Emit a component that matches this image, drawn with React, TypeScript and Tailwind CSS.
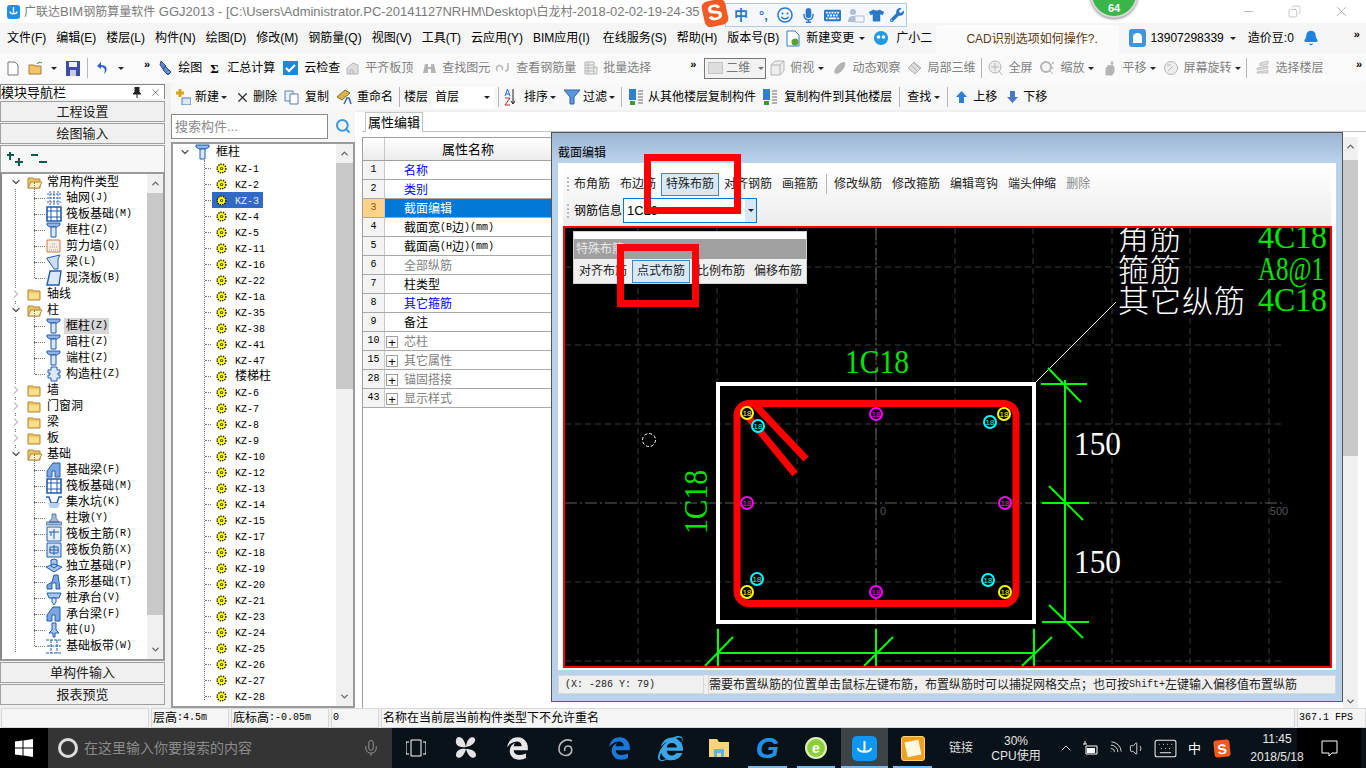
import React from "react";
import { FaEdgeLegacy, FaInternetExplorer, FaRegSmile, FaMicrophone, FaKeyboard, FaTshirt, FaWrench } from "react-icons/fa";
import {
  Bell,
  ChevronDown,
  ChevronRight,
  ChevronUp,
  Copy,
  Keyboard,
  Mic,
  Minus,
  Search,
  Volume1,
  Wifi,
  X,
} from "lucide-react";

const Dd = ({ className = "" }: { className?: string }) => (
  <span className={`inline-block w-0 h-0 border-x-[3px] border-t-[3px] border-x-transparent border-t-[#222] ${className}`} />
);

const Chevrons = ({ className = "" }: { className?: string }) => (
  <span className={`text-[11px] font-bold leading-none text-black ${className}`}>»</span>
);

const Sep = ({ className = "" }: { className?: string }) => <span className={`w-px h-[20px] bg-[#b5b5b5] ${className}`} />;

// ascii in the old bitmap song font runs 6px wide, so it gets its own span
const Sim = ({ text }: { text: string }) => (
  <>
    {text.split(/([\x00-\x7f]+)/).map((part, i) =>
      /[\x00-\x7f]/.test(part) ? (
        <span key={i} className="[font-family:'Liberation_Mono',monospace] text-[10px]">
          {part}
        </span>
      ) : (
        <span key={i}>{part}</span>
      )
    )}
  </>
);

const GrayIcon = ({ kind }: { kind: string }) => {
  const c = "#b4b4b4";
  return (
    <svg width="15" height="16" viewBox="0 0 15 16" className="shrink-0">
      {kind === "plate" && <path d="M2 14V8l6-5 5 2v9zM5 14v-4h3v4" fill="#ddd" stroke={c} />}
      {kind === "binoc" && <path d="M1 13l2-9h3v3h3V4h3l2 9H9v-4H6v4z" fill={c} />}
      {kind === "rebar" && <path d="M2 11a3 3 0 1 1 4-1M9 11a3 3 0 0 0 3-3V3" fill="none" stroke={c} strokeWidth="1.5" />}
      {kind === "batch" && <path d="M2 2h9v12H2zM2 5h9M2 8h9M2 11h9M5 2v12M11 7h3v7h-3" fill="#eee" stroke={c} />}
      {kind === "box" && <path d="M1 5l4-4h9v10l-4 4H1zM1 5h9v10M10 5l4-4" fill="#eee" stroke={c} />}
      {kind === "orbit" && <path d="M2 12C4 5 9 2 13 2c1 5-3 11-9 12z" fill={c} />}
      {kind === "local" && <path d="M1 8l6-6 7 6-6 6zM4 5l7 7M7 3l6 6" fill="#ddd" stroke={c} />}
      {kind === "full" && (
        <>
          <circle cx="7" cy="7" r="6" fill="#eee" stroke={c} />
          <path d="M7 3v8M3 7h8M11 11l3 4" stroke={c} fill="none" />
        </>
      )}
      {kind === "zoom" && (
        <>
          <circle cx="6" cy="7" r="5" fill="#f4f4f4" stroke={c} strokeWidth="2" />
          <path d="M10 11l3 3M12 3h2M13 2v2M12 8h2" stroke={c} />
        </>
      )}
      {kind === "pan" && <path d="M4 15V8l2-1V5l2 1 2-1 2 2v5l-2 3zM10 1v4M8 3h4" fill={c} stroke={c} />}
      {kind === "rotate" && (
        <>
          <circle cx="8" cy="8" r="6.5" fill="#eee" stroke={c} />
          <path d="M5 11l5-5M4 5h4" stroke={c} />
        </>
      )}
      {kind === "floors" && <path d="M5 3l8-2v3l-8 2zM2 8l11-2v2L2 10zM2 12l11-2v3H2z" fill="#ddd" stroke={c} strokeWidth=".7" />}
    </svg>
  );
};

const Tool = ({ icon, label, dd, gray, className = "" }: { icon?: React.ReactNode; label: string; dd?: boolean; gray?: boolean; className?: string }) => (
  <div className={`flex items-center shrink-0 ${gray ? "text-[#7f7f7f]" : "text-black"} ${className}`}>
    {icon}
    {icon && <span className="w-[5px]" />}
    <span>{label}</span>
    {dd && <Dd className="ml-[4px]" />}
  </div>
);

const ColIcon = () => (
  <svg width="15" height="16" viewBox="0 0 15 16" className="shrink-0">
    <path d="M1 1h13v2l-3 2H4L1 3z" fill="#8fb4ea" stroke="#1f5cb0" />
    <path d="M5 5h5v10H5z" fill="#dbe8fb" stroke="#1f5cb0" />
  </svg>
);

const Gear = () => (
  <svg width="11" height="11" viewBox="0 0 11 11" className="shrink-0">
    <circle cx="5.5" cy="5.5" r="4.4" fill="#ffff00" stroke="#111" strokeWidth="1.4" strokeDasharray="1.4 1" />
    <circle cx="5.5" cy="5.5" r="1.6" fill="#333" />
    <circle cx="5.5" cy="5.5" r=".7" fill="#ffff00" />
  </svg>
);

const Folder = ({ open }: { open?: boolean }) => (
  <svg width="16" height="13" viewBox="0 0 16 13" className="shrink-0">
    <path d="M1 2h5l1 1h6v9H1z" fill="#eec35c" stroke="#b08b3e" />
    {open ? <path d="M4 6h11l-3 6H1z" fill="#fdf0be" stroke="#b08b3e" /> : <path d="M2 5h10v6H2z" fill="#ffe089" />}
  </svg>
);

const TypeIcon = ({ kind }: { kind: string }) => {
  const b = "#1f5cb0";
  const inner = () => {
    switch (kind) {
      case "grid":
        return <path d="M1 4h14M1 8h14M1 12h14M4 1v14M8 1v14M12 1v14" stroke="#2d63b8" fill="none" strokeDasharray="2 1" />;
      case "raft":
        return (
          <>
            <path d="M1 1h14v14H1z" fill="#fff" stroke={b} strokeWidth="1.6" />
            <path d="M5 1v14M11 1v14M1 5h14M1 11h14" stroke={b} fill="none" />
          </>
        );
      case "col":
        return (
          <>
            <path d="M1 1h13v2l-3 2H4L1 3z" fill="#8fb4ea" stroke={b} />
            <path d="M5 5h5v10H5z" fill="#dbe8fb" stroke={b} />
          </>
        );
      case "wall":
        return (
          <>
            <path d="M1 2h13v12H1z" fill="#f2ede7" stroke="#d8793d" />
            <path d="M3 12h9M4 9h7M6 6h4" stroke="#9a9a9a" strokeDasharray="1 1" />
          </>
        );
      case "beam":
        return <path d="M1 4l13-3-2 4v10H8L4 9 1 5z" fill="#cfe0f6" stroke={b} />;
      case "slab":
        return <path d="M4 1h11l-2 14H1z" fill="#dbe8fb" stroke={b} strokeWidth="1.4" />;
      case "gz":
        return <path d="M5 1h6v3h3v3h-2v2h2v3h-3v3H5v-3H2V9h2V7H2V4h3z" fill="#dbe8fb" stroke={b} />;
      case "fbeam":
        return <path d="M1 15V9l6-8h7v14H9V9H6v6z" fill="#7aa7e2" stroke={b} />;
      case "pit":
        return (
          <>
            <path d="M0 3h3l2 6h6l2-6h3" stroke={b} fill="none" strokeWidth="1.4" />
            <path d="M2 9h12l-2 5H4z" fill="#b7d1f2" />
          </>
        );
      case "pier":
        return <path d="M0 15v-3h16v3zM3 12l3-4V4h4v4l3 4z" fill="#aab9cf" stroke={b} strokeWidth=".7" />;
      case "main":
        return (
          <>
            <path d="M1 1h14v14H1z" fill="#e8f1fc" stroke={b} />
            <path d="M3 6h10M8 3v10M5 6v4" stroke={b} fill="none" />
          </>
        );
      case "neg":
        return (
          <>
            <path d="M1 1h14v14H1z" fill="#cfe0f6" stroke={b} />
            <path d="M3 8h10M8 3v10M4 5h8v6H4z" stroke={b} fill="none" />
          </>
        );
      case "iso":
        return <path d="M0 9l8-3 8 3-8 5zM5 8V2l3-1 3 1v6l-3 2z" fill="#a9c6ee" stroke={b} />;
      case "strip":
        return <path d="M1 15v-4l5-3 2-7h4l2 14h-4V9H6v6z" fill="#7aa7e2" stroke={b} />;
      case "cap":
        return (
          <>
            <path d="M1 3h14l-2 5H3z" fill="#a9c6ee" stroke={b} />
            <path d="M6 8h4v4l-2 3-2-3z" fill="#dbe8fb" stroke={b} />
          </>
        );
      case "pile":
        return <path d="M6 1h4v7l3 3H9v4H7v-4H3l3-3z" fill="#a9c6ee" stroke={b} />;
      case "band":
        return <path d="M0 2h16M0 15h16M5 2v13M11 2v13M1 8h14" stroke={b} fill="none" strokeDasharray="3 1" />;
      default:
        return null;
    }
  };
  return (
    <svg width="16" height="16" viewBox="0 0 16 16" className="shrink-0">
      {inner()}
    </svg>
  );
};

type TreeRow = { label: string; icon?: string; open?: boolean; selected?: boolean };

const typeTree: TreeRow[] = [
  { label: "常用构件类型", open: true },
  { label: "轴网(J)", icon: "grid" },
  { label: "筏板基础(M)", icon: "raft" },
  { label: "框柱(Z)", icon: "col" },
  { label: "剪力墙(Q)", icon: "wall" },
  { label: "梁(L)", icon: "beam" },
  { label: "现浇板(B)", icon: "slab" },
  { label: "轴线" },
  { label: "柱", open: true },
  { label: "框柱(Z)", icon: "col", selected: true },
  { label: "暗柱(Z)", icon: "col" },
  { label: "端柱(Z)", icon: "col" },
  { label: "构造柱(Z)", icon: "gz" },
  { label: "墙" },
  { label: "门窗洞" },
  { label: "梁" },
  { label: "板" },
  { label: "基础", open: true },
  { label: "基础梁(F)", icon: "fbeam" },
  { label: "筏板基础(M)", icon: "raft" },
  { label: "集水坑(K)", icon: "pit" },
  { label: "柱墩(Y)", icon: "pier" },
  { label: "筏板主筋(R)", icon: "main" },
  { label: "筏板负筋(X)", icon: "neg" },
  { label: "独立基础(P)", icon: "iso" },
  { label: "条形基础(T)", icon: "strip" },
  { label: "桩承台(V)", icon: "cap" },
  { label: "承台梁(F)", icon: "fbeam" },
  { label: "桩(U)", icon: "pile" },
  { label: "基础板带(W)", icon: "band" },
];

const kzList = [
  "KZ-1", "KZ-2", "KZ-3", "KZ-4", "KZ-5", "KZ-11", "KZ-16", "KZ-22", "KZ-1a", "KZ-35", "KZ-38", "KZ-41", "KZ-47", "楼梯柱",
  "KZ-6", "KZ-7", "KZ-8", "KZ-9", "KZ-10", "KZ-12", "KZ-13", "KZ-14", "KZ-15", "KZ-17", "KZ-18", "KZ-19", "KZ-20", "KZ-21",
  "KZ-23", "KZ-24", "KZ-25", "KZ-26", "KZ-27", "KZ-28",
];

const props = [
  { n: "1", t: "名称", c: "text-[#0000ff]" },
  { n: "2", t: "类别", c: "text-[#0000ff]" },
  { n: "3", t: "截面编辑", c: "text-white", sel: true },
  { n: "4", t: "截面宽(B边)(mm)", c: "text-black" },
  { n: "5", t: "截面高(H边)(mm)", c: "text-black" },
  { n: "6", t: "全部纵筋", c: "text-[#808080]" },
  { n: "7", t: "柱类型", c: "text-black" },
  { n: "8", t: "其它箍筋", c: "text-[#0000ff]" },
  { n: "9", t: "备注", c: "text-black" },
  { n: "10", t: "芯柱", c: "text-[#808080]", plus: true },
  { n: "15", t: "其它属性", c: "text-[#808080]", plus: true },
  { n: "28", t: "锚固搭接", c: "text-[#808080]", plus: true },
  { n: "43", t: "显示样式", c: "text-[#808080]", plus: true },
];

const NavBtn = ({ label }: { label: string }) => (
  <div className="h-[21px] mb-px flex items-center justify-center bg-[#f0f0f0] border border-[#a0a0a0] text-[13px] text-[#222]">{label}</div>
);

const Bar = ({ x, y, color }: { x: number; y: number; color: string }) => (
  <g>
    <circle cx={x} cy={y} r="6" fill="#000" stroke={color} strokeWidth="2" />
    <text x={x} y={y + 3} textAnchor="middle" fontSize="8" fill={color} fontFamily="Liberation Sans">
      18
    </text>
  </g>
);

const Drawing = () => {
  const green = "#00e400";
  const serif = "Liberation Serif";
  const cjk = "Noto Sans CJK SC";
  return (
    <svg width="765" height="438" viewBox="565 228 765 438" className="block">
      {/* grid */}
      <g stroke="#3a3a3a" strokeDasharray="6 4" fill="none">
        {[638, 717, 797, 876, 955, 1033, 1112, 1190, 1269].map((x) => (
          <path key={x} d={`M${x} 228V664`} />
        ))}
        {[267, 345, 424, 582, 661].map((y) => (
          <path key={y} d={`M565 ${y}H1283`} />
        ))}
      </g>
      <path d="M565 503H1283" stroke="#606060" strokeDasharray="12 3 2 3" />
      <path d="M876 228V664" stroke="#606060" strokeDasharray="12 3 2 3" />
      <text x="883" y="515" fontSize="11" fill="#555" fontFamily="Liberation Sans" textAnchor="middle">0</text>
      <text x="1279" y="515" fontSize="11" fill="#555" fontFamily="Liberation Sans" textAnchor="middle">500</text>
      <circle cx="649" cy="440" r="6.5" fill="none" stroke="#fff" strokeDasharray="3 2" />

      {/* legend */}
      <g fill="#fff" fontFamily={cjk} fontSize="31" fontWeight="300">
        <text x="1118" y="249" letterSpacing="1">角筋</text>
        <text x="1118" y="281" letterSpacing="1">箍筋</text>
        <text x="1118" y="312" letterSpacing="1">其它纵筋</text>
      </g>
      <g fill={green} fontFamily={serif} fontSize="34">
        <text x="1258" y="248" textLength="69" lengthAdjust="spacingAndGlyphs">4C18</text>
        <text x="1258" y="280" textLength="66" lengthAdjust="spacingAndGlyphs">A8@1</text>
        <text x="1258" y="311" textLength="69" lengthAdjust="spacingAndGlyphs">4C18</text>
        <text x="845" y="373" textLength="64" lengthAdjust="spacingAndGlyphs">1C18</text>
        <text x="707" y="534" textLength="64" lengthAdjust="spacingAndGlyphs" transform="rotate(-90 707 534)">1C18</text>
      </g>
      <path d="M1036 382L1116 302" stroke="#fff" />

      {/* section */}
      <rect x="718" y="384" width="316" height="238" fill="none" stroke="#fff" strokeWidth="4" />
      <rect x="737" y="403.5" width="279" height="200" rx="12" fill="none" stroke="#ff0000" strokeWidth="7" />
      <path d="M740 407L795 474M755 405L806 459" stroke="#ff0000" strokeWidth="7" fill="none" />
      {[
        [876, 414, "#ff00ff"],
        [747, 503, "#ff00ff"],
        [1005, 503, "#ff00ff"],
        [876, 592, "#ff00ff"],
        [758, 426, "#00ffff"],
        [990, 422, "#00ffff"],
        [757, 579, "#00ffff"],
        [988, 580, "#00ffff"],
        [747, 413, "#ffff00"],
        [1004, 414, "#ffff00"],
        [747, 592, "#ffff00"],
        [1005, 592, "#ffff00"],
      ].map(([x, y, c]) => (
        <Bar key={`${x}-${y}`} x={x as number} y={y as number} color={c as string} />
      ))}

      {/* dimensions */}
      <g stroke="#00ff00" strokeWidth="2" fill="none">
        <path d="M1065 380V622M1041 384H1087M1042 503H1089M1042 622H1089" />
        <path d="M1048 368L1081 402M1049 486L1083 520M1049 605L1083 638" />
        <path d="M718 653H1034M718 629V666M876 629V666M1034 629V666" />
        <path d="M733 637L705 666M893 637L864 666M1052 637L1022 666" />
      </g>
      <g fill="#fff" fontFamily={serif} fontSize="33">
        <text x="1074" y="455" textLength="47" lengthAdjust="spacingAndGlyphs">150</text>
        <text x="1074" y="573" textLength="47" lengthAdjust="spacingAndGlyphs">150</text>
      </g>
    </svg>
  );
};

const Win = () => (
  <svg width="18" height="18" viewBox="0 0 18 18">
    <path d="M0 2.5L7.5 1.5V8.5H0zM8.5 1.4L18 0V8.5H8.5zM0 9.5H7.5V16.5L0 15.5zM8.5 9.5H18V18L8.5 16.6z" fill="#fff" />
  </svg>
);

const AppTile = ({ className = "", children }: { className?: string; children: React.ReactNode }) => (
  <div className={`flex items-center justify-center h-full relative ${className}`}>{children}</div>
);

const Running = () => <span className="absolute left-0 right-0 bottom-0 h-[2px] bg-[#76b9ed]" />;

const BarsIcon = ({ className = "" }: { className?: string }) => (
  <svg width="14" height="18" viewBox="0 0 14 18" className={className}>
    <path d="M0 1h7v11H0z" fill="#2d7fd0" />
    <path d="M1 13h5v4H1z" fill="#3a9a3a" />
    <path d="M9 3h5M9 6h5M9 9h5M9 12h5M9 15h5" stroke="#666" />
  </svg>
);

export default function App() {
  return (
    <div className="relative w-[1366px] h-[768px] overflow-hidden flex flex-col bg-[#f0f0f0] text-[12px] leading-none text-black [font-family:'Liberation_Sans','Noto_Sans_CJK_SC',sans-serif]">
      {/* title bar */}
      <div className="h-[23px] shrink-0 bg-white flex items-center relative">
        <div className="ml-[7px] w-[13px] h-[14px] rounded-[3px] bg-[#1c8fe8] flex items-center justify-center">
          <svg width="9" height="9" viewBox="0 0 9 9"><path d="M4.5 0v7M1 4.5c0 3 7 3 7 0" stroke="#fff" fill="none" strokeWidth="1.3" /></svg>
        </div>
        <span className="ml-[4px] text-[13px] text-[#7a7a7a] whitespace-nowrap">
          <span className="text-[12px]">广联达</span>BIM<span className="text-[12px]">钢筋算量软件</span> GGJ2013 - [C:\Users\Administrator.PC-20141127NRHM\Desktop\<span className="text-[12px]">白龙村</span>-2018-02-02-19-24-35
        </span>

        {/* sogou input bar */}
        <div className="absolute left-[725px] top-[3px] w-[182px] h-[24px] bg-[#f4f7fb] border border-[#b4cbe3] flex items-center text-[#2a79c9] z-10">
          <span className="ml-[8px] w-[14px] text-[14px] font-bold text-center">中</span>
          <span className="ml-[9px] w-[13px] text-[13px] font-bold text-center">°,</span>
          <FaRegSmile size={16} className="ml-[7px]" />
          <FaMicrophone size={15} className="ml-[8px]" />
          <FaKeyboard size={17} className="ml-[8px]" />
          <svg width="17" height="15" viewBox="0 0 17 15" className="ml-[7px]"><circle cx="5" cy="4" r="3" fill="#aebfd4" /><path d="M0 14c0-4 2-6 5-6s5 2 5 6z" fill="#aebfd4" /><path d="M7 8h9v6H7z" fill="#f4f7fb" stroke="#aebfd4" /></svg>
          <FaTshirt size={15} className="ml-[4px]" />
          <FaWrench size={14} className="ml-[6px]" />
        </div>
        <div className="absolute left-[703px] top-0 w-[24px] h-[26px] bg-[#f15a22] rounded-[6px] -rotate-12 flex items-center justify-center text-white text-[22px] font-bold z-20">S</div>

        {/* score ball */}
        <div className="absolute left-[1090px] top-[-30px] w-[48px] h-[48px] rounded-full bg-[#39b54a] border-2 border-[#d8d8d8] flex items-end justify-center pb-[2px] text-white font-bold text-[11px] shadow-[0_1px_3px_#888] z-10">64</div>

        <div className="ml-auto flex items-center text-[#999]">
          <Minus size={15} strokeWidth={1} className="mr-[32px]" />
          <Copy size={13} strokeWidth={1} className="mr-[32px] -scale-x-100" />
          <X size={17} strokeWidth={1} className="mr-[16px]" />
        </div>
      </div>

      {/* menu bar */}
      <div className="h-[30px] shrink-0 bg-[#f5f5f5] flex items-center pl-[7px] gap-[10px] whitespace-nowrap">
        {["文件(F)", "编辑(E)", "楼层(L)", "构件(N)", "绘图(D)", "修改(M)", "钢筋量(Q)", "视图(V)", "工具(T)", "云应用(Y)", "BIM应用(I)"].map((m) => (
          <span key={m}>{m}</span>
        ))}
        <span className="ml-[3px]">在线服务(S)</span>
        <span>帮助(H)</span>
        <span>版本号(B)</span>
        <div className="flex items-center ml-[-3px]">
          <svg width="14" height="17" viewBox="0 0 14 17"><path d="M1 1h8l4 4v11H1z" fill="#fff" stroke="#2d7fd0" /><circle cx="9" cy="12" r="3.5" fill="#5aa02c" /></svg>
          <span className="ml-[6px]">新建变更</span>
          <Dd className="ml-[5px]" />
          <svg width="16" height="16" viewBox="0 0 16 16" className="ml-[8px]"><path d="M8 1c4 0 7 3 7 7s-3 7-7 7-7-3-7-7 3-7 7-7z" fill="#1f9be8" /><circle cx="5.5" cy="7" r="1.8" fill="#fff" /><circle cx="10.5" cy="7" r="1.8" fill="#fff" /></svg>
          <span className="ml-[7px]">广小二</span>
        </div>
        <div className="h-[28px] w-[183px] ml-[-6px] mt-[1px] bg-[#fbfbfb] rounded-t-[3px] flex items-center pl-[30px] text-[#5c3810]">CAD识别选项如何操作?.</div>
        <div className="flex items-center">
          <span className="w-[17px] h-[18px] rounded-[3px] bg-[#3f96d8] flex items-center justify-center">
            <span className="w-[9px] h-[10px] rounded-t-full bg-white" />
          </span>
          <span className="ml-[4px]">13907298339</span>
          <Dd className="ml-[6px]" />
          <span className="ml-[12px]">造价豆:0</span>
          <Bell size={16} className="ml-[9px] text-[#1f82e0]" fill="#1f82e0" />
          <Chevrons className="ml-[35px] -mt-[8px]" />
        </div>
      </div>

      {/* main toolbar */}
      <div className="h-[30px] shrink-0 bg-[#f5f5f5] flex items-center whitespace-nowrap">
        <div className="h-full flex-1 flex items-center pl-[7px] bg-[#fafafa] rounded-[2px]">
          <svg width="12" height="15" viewBox="0 0 12 15"><path d="M1 1h7l3 3v10H1z" fill="#fff" stroke="#777" /></svg>
          <svg width="16" height="15" viewBox="0 0 16 15" className="ml-[9px]"><path d="M1 4h5l1 1h6v8H1z" fill="#f2c56b" stroke="#a57c32" /><path d="M9 3c1-2 3-2 5-1" stroke="#3a8a2a" fill="none" /></svg>
          <Dd className="ml-[7px]" />
          <svg width="14" height="15" viewBox="0 0 14 15" className="ml-[9px]"><path d="M0 0h14v15H0z" fill="#3b4fa8" /><path d="M3 1h8v5H3z" fill="#eef" /><path d="M4 9h6v6H4z" fill="#ccd" /></svg>
          <Sep className="ml-[7px]" />
          <svg width="13" height="15" viewBox="0 0 13 15" className="ml-[8px]"><path d="M5 1L1 5l4 3V6c3 0 5 2 3 7 4-3 4-9-3-9z" fill="#2d62c8" /></svg>
          <Dd className="ml-[9px]" />
          <Chevrons className="ml-[20px] -mt-[8px]" />

          <Tool className="ml-[8px]" icon={<svg width="15" height="16" viewBox="0 0 15 16"><path d="M3 1l5 5-3 3-3-4zM7 6l6 6-3 3-5-5z" fill="#5f87c9" stroke="#2b4f8f" /></svg>} label="绘图" />
          <span className="ml-[8px] w-[10px] font-bold text-[13px] [font-family:'Liberation_Serif',serif]">Σ</span>
          <span className="ml-[7px]">汇总计算</span>
          <svg width="15" height="16" viewBox="0 0 15 16" className="ml-[8px]"><path d="M0 1h15v14H0z" fill="#1e88d8" /><path d="M3 8l3 3 6-6" stroke="#fff" strokeWidth="2" fill="none" /></svg>
          <span className="ml-[6px]">云检查</span>
          <Tool gray className="ml-[5px]" icon={<GrayIcon kind="plate" />} label="平齐板顶" />
          <Tool gray className="ml-[9px]" icon={<GrayIcon kind="binoc" />} label="查找图元" />
          <Tool gray className="ml-[6px]" icon={<GrayIcon kind="rebar" />} label="查看钢筋量" />
          <Tool gray className="ml-[7px]" icon={<GrayIcon kind="batch" />} label="批量选择" />
          <Chevrons className="ml-[39px] -mt-[8px]" />
          <div className="ml-[8px] w-[62px] h-[21px] border border-[#777] bg-[#f2f2f2] flex items-center pl-[3px] text-[#777]">
            <span className="w-[15px] h-[12px] bg-[#ddd] border border-[#c4c4c4]" />
            <span className="ml-[3px]">二维</span>
            <Dd className="ml-[8px] border-t-[#777]" />
          </div>
          <Tool gray className="ml-[4px]" icon={<GrayIcon kind="box" />} label="俯视" dd />
          <Tool gray className="ml-[8px]" icon={<GrayIcon kind="orbit" />} label="动态观察" />
          <Tool gray className="ml-[7px]" icon={<GrayIcon kind="local" />} label="局部三维" />
          <Sep className="ml-[6px]" />
          <Tool gray className="ml-[6px]" icon={<GrayIcon kind="full" />} label="全屏" />
          <Tool gray className="ml-[8px]" icon={<GrayIcon kind="zoom" />} label="缩放" dd />
          <Tool gray className="ml-[8px]" icon={<GrayIcon kind="pan" />} label="平移" dd />
          <Tool gray className="ml-[7px]" icon={<GrayIcon kind="rotate" />} label="屏幕旋转" dd />
          <Sep className="ml-[5px]" />
          <Tool gray className="ml-[8px]" icon={<GrayIcon kind="floors" />} label="选择楼层" />
          <Chevrons className="ml-auto mr-[4px] -mt-[8px]" />
        </div>
      </div>

      {/* work area */}
      <div className="h-[625px] shrink-0 flex bg-[#f0f0f0]">
        {/* module navigator */}
        <div className="w-[165px] shrink-0 flex flex-col pt-px">
          <div className="h-[15px] flex items-center border-t border-x border-[#888] text-[13px] bg-white">
            <span>模块导航栏</span>
            <svg width="8" height="11" viewBox="0 0 8 11" className="ml-auto"><path d="M2 0h4v5l2 2H0l2-2zM4 7v4" fill="#222" stroke="#222" /></svg>
            <X size={11} strokeWidth={1} className="ml-[9px] mr-[3px]" />
          </div>
          <div className="pt-[2px]">
            <NavBtn label="工程设置" />
            <NavBtn label="绘图输入" />
          </div>
          <div className="h-[27px] flex items-center pl-[6px] gap-[7px] border-x border-t border-[#a0a0a0] bg-[#f7f7f7]">
            <svg width="17" height="14" viewBox="0 0 17 14"><path d="M3 0v8M0 3h7M12 6v8M8 10h8" stroke="#0a5a50" strokeWidth="2" /></svg>
            <svg width="17" height="14" viewBox="0 0 17 14"><path d="M0 3h7M8 10h8" stroke="#0a5a50" strokeWidth="2" /></svg>
          </div>
          <div className="h-[489px] relative flex bg-white border-2 border-[#9a9a9a] border-l-[#888] overflow-hidden">
            <div className="flex-1 relative">
              <span className="absolute left-[13px] top-[8px] h-[470px] border-l border-dotted border-[#777]" />
              {typeTree.map((r, i) => (
                <div key={i} className="h-[16px] flex items-center relative whitespace-nowrap">
                  {r.icon ? (
                    <>
                      <span className="absolute left-[32px] -top-[8px] h-[16px] border-l border-dotted border-[#777]" />
                      <span className="absolute left-[33px] w-[10px] top-[8px] border-t border-dotted border-[#777]" />
                      <span className="ml-[44px]"><TypeIcon kind={r.icon} /></span>
                      <span className={`ml-[2px] pl-[2px] h-[16px] pr-[1px] flex items-center ${r.selected ? "bg-[#d6d6d6]" : ""}`}>
                        <Sim text={r.label} />
                      </span>
                    </>
                  ) : (
                    <>
                      <span className="ml-[8px] w-[11px] bg-white relative">
                        {r.open ? <ChevronDown size={12} strokeWidth={2.5} className="text-[#555]" /> : <ChevronRight size={12} strokeWidth={2.5} className="text-[#bbb]" />}
                      </span>
                      <span className="ml-[6px] bg-white relative"><Folder open={r.open} /></span>
                      <span className="ml-[4px]">{r.label}</span>
                    </>
                  )}
                </div>
              ))}
            </div>
            <div className="w-[16px] bg-[#f0f0f0] flex flex-col items-center shrink-0">
              <ChevronUp size={11} strokeWidth={3} className="text-[#666] my-[4px]" />
              <div className="w-full h-[422px] bg-[#c8c8c8]" />
              <ChevronDown size={11} strokeWidth={3} className="text-[#666] mt-auto mb-[4px]" />
            </div>
          </div>
          <div className="pt-px">
            <NavBtn label="单构件输入" />
            <NavBtn label="报表预览" />
          </div>
        </div>

        {/* right part */}
        <div className="flex-1 flex flex-col min-w-0 pl-[6px]">
          {/* component toolbar */}
          <div className="h-[27px] shrink-0 bg-[#f8f8f8] flex items-center whitespace-nowrap pl-[5px] pt-[1px]">
            <svg width="15" height="16" viewBox="0 0 15 16"><path d="M4 0v8M0 4h8" stroke="#d6a416" strokeWidth="3" /><path d="M6 9h9v7H6z" fill="#dbe8fb" stroke="#4a78b8" /></svg>
            <span className="ml-[4px]">新建</span>
            <Dd className="ml-[2px]" />
            <X size={15} strokeWidth={2} className="ml-[8px] text-[#333]" />
            <span className="ml-[3px]">删除</span>
            <svg width="15" height="15" viewBox="0 0 15 15" className="ml-[7px]"><path d="M1 1h8v10H1z" fill="#e8f1fc" stroke="#5a7fae" /><path d="M6 4h8v10H6z" fill="#fff" stroke="#5a7fae" /></svg>
            <span className="ml-[6px]">复制</span>
            <svg width="16" height="16" viewBox="0 0 16 16" className="ml-[7px]"><path d="M1 8l8-7 5 3-8 7z" fill="#d9b34a" stroke="#8a6c1f" /><path d="M8 15l3-6 2 0 2 6" stroke="#3468b8" fill="none" strokeWidth="1.5" /></svg>
            <span className="ml-[5px]">重命名</span>
            <Sep className="ml-[6px]" />
            <span className="ml-[4px]">楼层</span>
            <div className="ml-[5px] w-[61px] h-[21px] bg-white flex items-center pl-[2px]">
              <span>首层</span>
              <Dd className="ml-auto mr-[4px]" />
            </div>
            <Sep className="ml-[4px]" />
            <div className="ml-[5px] w-[13px] flex items-center">
              <svg width="13" height="18" viewBox="0 0 13 18"><path d="M9 1v15M9 16l-2-3M9 16l2-3" stroke="#222" fill="none" /><path d="M1 8l2.5-7L6 8M2 6h3" stroke="#2d62c8" fill="none" /><path d="M1 10h5l-5 7h5" stroke="#b03030" fill="none" /></svg>
            </div>
            <span className="ml-[7px]">排序</span>
            <Dd className="ml-[2px]" />
            <svg width="16" height="16" viewBox="0 0 16 16" className="ml-[8px]"><path d="M0 1h16l-6 7v7H6V8z" fill="#5a96e0" stroke="#2d62a8" /></svg>
            <span className="ml-[3px]">过滤</span>
            <Dd className="ml-[2px]" />
            <Sep className="ml-[6px]" />
            <BarsIcon className="ml-[7px]" />
            <span className="ml-[5px]">从其他楼层复制构件</span>
            <BarsIcon className="ml-[7px]" />
            <span className="ml-[7px]">复制构件到其他楼层</span>
            <Sep className="ml-[7px]" />
            <span className="ml-[7px]">查找</span>
            <Dd className="ml-[3px]" />
            <Sep className="ml-[7px]" />
            <svg width="11" height="12" viewBox="0 0 11 12" className="ml-[8px]"><path d="M5.5 0L11 6H8v6H3V6H0z" fill="#2d7fd0" /></svg>
            <span className="ml-[6px]">上移</span>
            <svg width="11" height="12" viewBox="0 0 11 12" className="ml-[10px]"><path d="M5.5 12L11 6H8V0H3v6H0z" fill="#4a78c8" /></svg>
            <span className="ml-[5px]">下移</span>
          </div>

          <div className="flex-1 flex min-h-0 bg-white">
            {/* component list */}
            <div className="w-[184px] shrink-0 flex flex-col bg-[#f0f0f0]">
              <div className="h-[32px] shrink-0 pt-[4px] pb-[3px] flex bg-[#f6f6f6]">
                <div className="w-[157px] h-[25px] border border-[#8a8a8a] bg-white flex items-center pl-[3px] text-[13px] text-[#8a8a8a]">搜索构件...</div>
                <Search size={16} strokeWidth={3} className="ml-[7px] mt-[4px] text-[#3a9ae0]" />
              </div>
              <div className="flex-1 min-h-0 flex bg-white border-2 border-[#9a9a9a] overflow-hidden">
                <div className="flex-1 relative">
                  <span className="absolute left-[31px] top-[16px] h-[540px] border-l border-dotted border-[#777]" />
                  <div className="h-[16px] flex items-center relative">
                    <ChevronDown size={12} strokeWidth={2.5} className="ml-[6px] text-[#555]" />
                    <span className="ml-[4px]"><ColIcon /></span>
                    <span className="ml-[6px]">框柱</span>
                  </div>
                  {kzList.map((k) => (
                    <div key={k} className="h-[16px] flex items-center relative">
                      <span className="absolute left-[32px] w-[10px] top-[8px] border-t border-dotted border-[#777]" />
                      <span className={`ml-[39px] h-[16px] flex items-center pl-[4px] pr-[4px] relative ${k === "KZ-3" ? "bg-[#316ac5] text-[#e8e8e8]" : "bg-white"}`}>
                        <Gear />
                        <span className="ml-[8px]"><Sim text={k} /></span>
                      </span>
                    </div>
                  ))}
                </div>
                <div className="w-[17px] bg-[#f0f0f0] flex flex-col items-center shrink-0">
                  <ChevronUp size={11} strokeWidth={3} className="text-[#666] my-[4px]" />
                  <div className="w-full h-[226px] bg-[#c8c8c8]" />
                  <ChevronDown size={11} strokeWidth={3} className="text-[#666] mt-auto mb-[4px]" />
                </div>
              </div>
            </div>

            {/* properties */}
            <div className="flex-1 min-w-0 flex flex-col pl-[7px]">
              <div className="h-[2px] bg-[#f0f0f0] -ml-[7px]" />
              <div className="h-[20px] flex border-b border-[#c4c4c4]">
                <div className="ml-[3px] w-[58px] h-[20px] bg-white border-t border-x border-[#c4c4c4] flex items-center justify-center text-[13px]">属性编辑</div>
              </div>
              <div className="h-[5px]" />
              <div className="flex-1 min-h-0 flex">
                <div className="w-[189px] shrink-0 border-l border-[#a0a0a0] border-t flex flex-col">
                  <div className="h-[23px] flex border-b border-[#a0a0a0] bg-gradient-to-b from-white to-[#ececec]">
                    <div className="w-[22px] border-r border-[#c8c8c8]" />
                    <div className="flex-1 flex items-center justify-center text-[13px]">属性名称</div>
                  </div>
                  {props.map((p) => (
                    <div key={p.n} className="h-[19px] flex border-b border-[#a8a8a8]">
                      <div className={`w-[22px] flex items-center justify-center border-r border-[#c8c8c8] text-[12px] ${p.sel ? "bg-[#ffd28a] text-[#8a5a10]" : "bg-[#f4f4f4]"}`}>
                        <Sim text={p.n} />
                      </div>
                      <div className={`flex-1 flex items-center whitespace-nowrap pt-[2px] ${p.sel ? "bg-[#0078d7]" : ""} ${p.c}`}>
                        {p.plus ? (
                          <span className="ml-[1px] mr-[6px] w-[12px] h-[12px] border border-[#a0a0a0] flex items-center justify-center text-black text-[13px]">+</span>
                        ) : (
                          <span className="w-[19px]" />
                        )}
                        <Sim text={p.t} />
                      </div>
                    </div>
                  ))}
                </div>
                <div className="ml-auto w-[15px] mr-[8px] bg-[#f0f0f0] flex flex-col items-center shrink-0">
                  <ChevronUp size={11} strokeWidth={3} className="text-[#666] my-[4px]" />
                  <div className="w-full h-[296px] mt-[4px] bg-[#c8c8c8]" />
                  <ChevronDown size={11} strokeWidth={3} className="text-[#666] mt-auto mb-[1px]" />
                </div>
              </div>
            </div>
          </div>
        </div>
      </div>

      {/* status bar */}
      <div className="h-[20px] shrink-0 flex gap-[2px] pl-px bg-[#f0f0f0] whitespace-nowrap">
        <div className="w-[148px] bg-[#f5f5f5] border border-[#d8d8d8]" />
        <div className="w-[78px] bg-[#f5f5f5] border border-[#d8d8d8] flex items-center pl-[1px]"><Sim text="层高:4.5m" /></div>
        <div className="w-[98px] bg-[#f5f5f5] border border-[#d8d8d8] flex items-center pl-[1px]"><Sim text="底标高:-0.05m" /></div>
        <div className="w-[48px] bg-[#f5f5f5] border border-[#d8d8d8] flex items-center pl-[1px]"><Sim text="0" /></div>
        <div className="w-[914px] bg-[#f5f5f5] border border-[#d8d8d8] flex items-center pl-[1px]">名称在当前层当前构件类型下不允许重名</div>
        <div className="flex-1 bg-[#f5f5f5] border border-[#d8d8d8] flex items-center pl-[1px]"><Sim text="367.1 FPS" /></div>
      </div>

      {/* taskbar */}
      <div className="h-[40px] shrink-0 bg-[#081218] flex items-center text-white whitespace-nowrap">
        <div className="w-[48px] h-full bg-black flex items-center justify-center"><Win /></div>
        <div className="w-[344px] h-full bg-[#343434] flex items-center pl-[10px]">
          <span className="w-[20px] h-[20px] rounded-full border-[3px] border-[#dcdcdc]" />
          <span className="ml-[6px] text-[14px] text-[#8a8a8a]">在这里输入你要搜索的内容</span>
          <Mic size={18} strokeWidth={1.2} className="ml-[110px] text-[#999]" />
        </div>
        <AppTile className="w-[48px]">
          <svg width="20" height="18" viewBox="0 0 20 18"><path d="M5 1h10v16H5zM3 3H0v12h3M17 3h3v12h-3" stroke="#fff" fill="none" /></svg>
        </AppTile>
        <AppTile className="w-[52px]">
          <svg width="22" height="24" viewBox="0 0 22 24"><path d="M11 11C4 12 0 9 1 4s8-4 10 7zM11 11c6-1 10-5 9-8s-8-3-9 8zM11 13c-6-1-10 2-10 6s7 5 10-6zM11 13c5 0 10 2 10 6s-7 5-10-6z" fill="#e4e4e4" /></svg>
        </AppTile>
        <AppTile className="w-[50px]"><FaEdgeLegacy size={23} className="text-[#e8e8e8]" /></AppTile>
        <AppTile className="w-[50px]">
          <svg width="20" height="20" viewBox="0 0 20 20"><path d="M15 3C9 0 2 4 2 11c0 6 7 8 11 5 3-3 2-8-2-8-3 0-4 3-3 5" stroke="#b8b8b8" strokeWidth="1.6" fill="none" /></svg>
        </AppTile>
        <AppTile className="w-[54px]"><FaEdgeLegacy size={23} className="text-[#1a78d8]" /></AppTile>
        <AppTile className="w-[48px]"><FaInternetExplorer size={25} className="text-[#3aa6e8]" /></AppTile>
        <AppTile className="w-[50px]">
          <svg width="22" height="22" viewBox="0 0 22 22"><path d="M1 2h8l2 3h10v15H1z" fill="#f5d77a" /><path d="M6 12h10v8h-3v-4H9v4H6z" fill="#5ab4e8" /></svg>
        </AppTile>
        <AppTile className="w-[39px] ml-[4px]">
          <span className="text-[30px] font-bold italic text-[#1f8fe8]">G</span>
          <Running />
        </AppTile>
        <AppTile className="w-[38px] ml-[10px]">
          <span className="w-[22px] h-[22px] rounded-full bg-[#8ccf3c] border-2 border-[#e0f0c0] text-[#fff] flex items-center justify-center text-[14px] font-bold">e</span>
          <Running />
        </AppTile>
        <AppTile className="w-[47px] ml-[6px] bg-[#3c4448]">
          <span className="w-[25px] h-[25px] rounded-[5px] bg-[#0f96f0] flex items-center justify-center">
            <svg width="17" height="17" viewBox="0 0 17 17"><path d="M8.5 1v11M2 8c0 5 13 5 13 0" stroke="#fff" strokeWidth="2" fill="none" /></svg>
          </span>
          <Running />
        </AppTile>
        <AppTile className="w-[39px] ml-[5px]">
          <span className="w-[24px] h-[25px] rounded-[3px] bg-[#f0a020] border border-[#ffd070] flex items-center justify-center">
            <span className="w-[14px] h-[15px] bg-[#fff8e0] rotate-[-12deg]" />
          </span>
          <Running />
        </AppTile>
        <span className="ml-[17px] text-[12px] text-[#ddd]">链接</span>
        <div className="ml-[18px] w-[50px] flex flex-col items-center gap-[3px] text-[12px] text-[#e4e4e4]">
          <span>30%</span>
          <span>CPU使用</span>
        </div>
        <ChevronUp size={16} strokeWidth={1.3} className="ml-[17px] text-[#e8e8e8]" />
        <svg width="16" height="14" viewBox="0 0 16 14" className="ml-[8px]"><path d="M1 3h4M3 0v3M4 5h11v8H4z" stroke="#fff" fill="none" /><path d="M5 7h8v5H5z" fill="#fff" /></svg>
        <Wifi size={16} strokeWidth={1.3} className="ml-[9px] text-[#ddd] rotate-45" />
        <Volume1 size={17} strokeWidth={1.2} className="ml-[6px] text-[#eee]" />
        <Keyboard size={25} strokeWidth={1} className="ml-[7px] text-[#eee]" />
        <span className="ml-[10px] text-[13px]">中</span>
        <span className="ml-[13px] w-[16px] h-[17px] rounded-[3px] bg-[#f15a22] flex items-center justify-center text-[14px] font-bold -rotate-6">S</span>
        <div className="ml-[17px] w-[60px] flex flex-col items-center gap-[6px] text-[12px] text-[#e8e8e8] relative z-10">
          <span>11:45</span>
          <span>2018/5/18</span>
        </div>
        <div className="-ml-[10px] w-[64px] h-full bg-black flex items-center justify-center">
          <svg width="17" height="17" viewBox="0 0 17 17"><path d="M1 1h15v12h-5l-3 3v-3H1z" stroke="#fff" fill="none" /></svg>
        </div>
      </div>

      {/* section editor window */}
      <div className="absolute left-[551px] top-[132px] w-[792px] h-[570px] border border-[#555] border-b-[#2f6f90] bg-[#b9d1ea] flex flex-col z-20">
        <div className="h-[30px] shrink-0 bg-gradient-to-b from-[#9bb5d3] to-[#bcd3ec] flex items-center pl-[6px] pt-[10px]">截面编辑</div>
        <div className="mx-[6px] h-[507px] shrink-0 bg-white px-[5px] flex flex-col">
          <div className="h-[63px] shrink-0 bg-gradient-to-b from-white to-[#ececec] mt-[2px] -mb-[2px] whitespace-nowrap">
            <div className="h-[32px] pt-[6px] flex items-center text-[#222]">
              <span className="ml-[4px] h-[14px] border-l-2 border-dotted border-[#bbb]" />
              <span className="ml-[5px]">布角筋</span>
              <span className="ml-[10px]">布边筋</span>
              <span className="ml-[5px] w-[58px] h-[23px] bg-[#d8e8f6] border border-[#3a8ac8] flex items-center justify-center">特殊布筋</span>
              <span className="ml-[5px]">对齐钢筋</span>
              <span className="ml-[10px]">画箍筋</span>
              <Sep className="ml-[8px] h-[14px]" />
              <span className="ml-[7px]">修改纵筋</span>
              <span className="ml-[10px]">修改箍筋</span>
              <span className="ml-[10px]">编辑弯钩</span>
              <span className="ml-[10px]">端头伸缩</span>
              <span className="ml-[10px] text-[#888]">删除</span>
            </div>
            <div className="h-[27px] flex items-center">
              <span className="ml-[4px] h-[14px] border-l-2 border-dotted border-[#bbb]" />
              <span className="ml-[5px]">钢筋信息</span>
              <div className="ml-[1px] w-[134px] h-[25px] border border-[#0078d7] bg-white flex items-center pl-[3px] text-[13px]">
                1C18
                <span className="ml-auto w-[11px] h-full bg-[#d8e8f6] flex items-center justify-center"><Dd /></span>
              </div>
            </div>
          </div>
          <div className="w-[769px] h-[442px] shrink-0 border-2 border-[#ff0000] bg-black overflow-hidden">
            <Drawing />
          </div>
        </div>
        <div className="mx-[6px] mt-[5px] h-[19px] shrink-0 flex gap-[4px] bg-[#f0f0f0] text-[#222] whitespace-nowrap">
          <div className="w-[146px] border border-[#d8d8d8] flex items-center pl-[6px]"><Sim text="(X: -286 Y: 79)" /></div>
          <div className="flex-1 border border-[#d8d8d8] flex items-center"><Sim text="需要布置纵筋的位置单击鼠标左键布筋，布置纵筋时可以捕捉网格交点；也可按Shift+左键输入偏移值布置纵筋" /></div>
        </div>
      </div>

      {/* floating toolbar on the canvas */}
      <div className="absolute left-[573px] top-[231px] w-[234px] h-[53px] z-30 flex flex-col whitespace-nowrap border border-[#d0d0d0]">
        <div className="h-[7px] bg-white" />
        <div className="h-[20px] bg-[#a0a0a0] text-[#e8e8e8] flex items-center pl-[2px]">特殊布筋</div>
        <div className="flex-1 bg-[#f0f0f0] flex items-center text-[#222] pl-[5px]">
          <span>对齐布筋</span>
          <span className="ml-[5px] w-[58px] h-[23px] bg-[#d8e8f6] border border-[#3a8ac8] flex items-center justify-center">点式布筋</span>
          <span className="ml-[7px]">比例布筋</span>
          <span className="ml-[9px]">偏移布筋</span>
        </div>
      </div>

      {/* red marks drawn on top of the screenshot */}
      <div className="absolute left-[644px] top-[154px] w-[97px] h-[60px] border-[7px] border-[#ff0000] z-40" />
      <div className="absolute left-[617px] top-[244px] w-[82px] h-[63px] border-[7px] border-[#ff0000] z-40" />
    </div>
  );
}
